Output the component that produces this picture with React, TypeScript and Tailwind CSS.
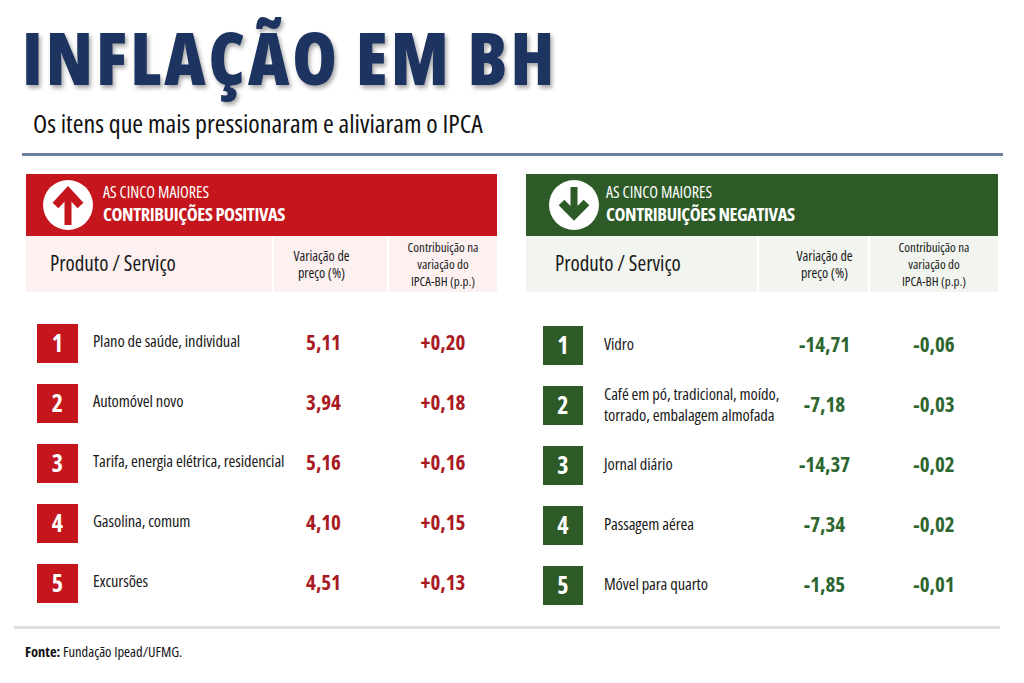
import React from 'react';

// Infográfico: Inflação em BH — maiores contribuições positivas e negativas

const cond = "font-['Open_Sans','Roboto',sans-serif] font-stretch-[75%]";

type Item = { n: number; label: string[]; price: string; contrib: string };

const positivos: Item[] = [
  { n: 1, label: ['Plano de saúde, individual'], price: '5,11', contrib: '+0,20' },
  { n: 2, label: ['Automóvel novo'], price: '3,94', contrib: '+0,18' },
  { n: 3, label: ['Tarifa, energia elétrica, residencial'], price: '5,16', contrib: '+0,16' },
  { n: 4, label: ['Gasolina, comum'], price: '4,10', contrib: '+0,15' },
  { n: 5, label: ['Excursões'], price: '4,51', contrib: '+0,13' },
];

const negativos: Item[] = [
  { n: 1, label: ['Vidro'], price: '-14,71', contrib: '-0,06' },
  { n: 2, label: ['Café em pó, tradicional, moído,', 'torrado, embalagem almofada'], price: '-7,18', contrib: '-0,03' },
  { n: 3, label: ['Jornal diário'], price: '-14,37', contrib: '-0,02' },
  { n: 4, label: ['Passagem aérea'], price: '-7,34', contrib: '-0,02' },
  { n: 5, label: ['Móvel para quarto'], price: '-1,85', contrib: '-0,01' },
];

function ArrowUp() {
  return (
    <svg viewBox="0 0 50 50" className="h-[50px] w-[50px] shrink-0">
      <circle cx="25" cy="25" r="25" fill="#fff" />
      <path d="M25 45V16" stroke="#c4161c" strokeWidth="7" fill="none" />
      <path d="M12.5 25.5L25 12L37.5 25.5" stroke="#c4161c" strokeWidth="8" fill="none" strokeLinejoin="miter" />
    </svg>
  );
}

function ArrowDown() {
  return (
    <svg viewBox="0 0 50 50" className="h-[50px] w-[50px] shrink-0">
      <circle cx="25" cy="25" r="25" fill="#fff" />
      <path d="M25 7V34" stroke="#2d5a27" strokeWidth="7" fill="none" />
      <path d="M12.5 22.5L25 35L37.5 22.5" stroke="#2d5a27" strokeWidth="8" fill="none" strokeLinejoin="miter" />
    </svg>
  );
}

function PositivePanel() {
  return (
    <div className="w-[471px]">
      <div className="flex h-[62px] items-center gap-[10px] bg-[#c4161c] pl-[17px] text-white">
        <ArrowUp />
        <div className={`${cond} -mt-[3px] leading-none`}>
          <div className="text-[16px]">AS CINCO MAIORES</div>
          <div className="mt-[5px] text-[18.5px] font-bold tracking-[-0.4px]">CONTRIBUIÇÕES POSITIVAS</div>
        </div>
      </div>
      <div className={`${cond} flex h-[56px] gap-[2px] bg-white text-[#1a1a1a]`}>
        <div className="flex w-[246px] items-center bg-[#fcf0f1] pl-[24px] text-[21px]">Produto / Serviço</div>
        <div className="flex w-[113px] items-center justify-center bg-[#fcf0f1] pr-[18px] text-center text-[14px] leading-[17px]">
          Variação de<br />preço (%)
        </div>
        <div className="flex flex-1 items-center justify-center bg-[#fcf0f1] text-center text-[13px] leading-[17px]">
          Contribuição na<br />variação do<br />IPCA-BH (p.p.)
        </div>
      </div>
      <div className="mt-[21px]">
        {positivos.map(it => (
          <div key={it.n} className={`${cond} flex h-[60px] items-center`}>
            <div className="flex w-[246px] items-center">
              <div className="ml-[11px] flex h-[39px] w-[41px] shrink-0 items-center justify-center bg-[#c4161c] text-[24px] font-bold text-white">
                {it.n}
              </div>
              <div className="ml-[15px] -mt-[4px] whitespace-nowrap text-[16.5px] leading-[20px] tracking-[-0.1px] text-[#1a1a1a]">{it.label.join(' ')}</div>
            </div>
            <div className="ml-[2px] w-[113px] pr-[14px] text-center text-[21px] font-bold text-[#a81a1f]">{it.price}</div>
            <div className="ml-[2px] flex-1 text-center text-[21px] font-bold text-[#a81a1f]">{it.contrib}</div>
          </div>
        ))}
      </div>
    </div>
  );
}

function NegativePanel() {
  return (
    <div className="w-[472px]">
      <div className="flex h-[62px] items-center gap-[7px] bg-[#2d5a27] pl-[23px] text-white">
        <ArrowDown />
        <div className={`${cond} -mt-[3px] leading-none`}>
          <div className="text-[16px]">AS CINCO MAIORES</div>
          <div className="mt-[5px] text-[18.5px] font-bold tracking-[-0.4px]">CONTRIBUIÇÕES NEGATIVAS</div>
        </div>
      </div>
      <div className={`${cond} flex h-[56px] gap-[2px] bg-white text-[#1a1a1a]`}>
        <div className="flex w-[231px] items-center bg-[#f1f4ef] pl-[29px] text-[21px]">Produto / Serviço</div>
        <div className="flex w-[109px] items-center justify-center bg-[#f1f4ef] pl-[22px] text-center text-[14px] leading-[17px]">
          Variação de<br />preço (%)
        </div>
        <div className="flex flex-1 items-center justify-center bg-[#f1f4ef] text-center text-[13px] leading-[17px]">
          Contribuição na<br />variação do<br />IPCA-BH (p.p.)
        </div>
      </div>
      <div className="mt-[23px]">
        {negativos.map(it => (
          <div key={it.n} className={`${cond} flex h-[60px] items-center`}>
            <div className="flex w-[231px] items-center">
              <div className="ml-[17px] flex h-[39px] w-[40px] shrink-0 items-center justify-center bg-[#2d5a27] text-[24px] font-bold text-white">
                {it.n}
              </div>
              <div className="ml-[21px] -mt-[3px] whitespace-nowrap text-[16.5px] leading-[21px] tracking-[-0.1px] text-[#1a1a1a]">
                {it.label.map(l => (
                  <div key={l}>{l}</div>
                ))}
              </div>
            </div>
            <div className="ml-[2px] w-[109px] pl-[22px] text-center text-[21px] font-bold text-[#2e6630]">{it.price}</div>
            <div className="ml-[2px] flex-1 text-center text-[21px] font-bold text-[#2e6630]">{it.contrib}</div>
          </div>
        ))}
      </div>
    </div>
  );
}

export default function App() {
  return (
    <div className="h-[683px] w-[1024px] overflow-hidden bg-white">
      <div className="pl-[22px] pt-[18px]">
        <h1 className="font-['Open_Sans',sans-serif] font-stretch-[75%] text-[72px] font-extrabold leading-[78px] tracking-[3px] text-[#1d3461] [text-shadow:2px_3px_4px_rgba(0,0,0,0.35)]">
          INFLAÇÃO EM BH
        </h1>
        <p className={`${cond} mt-[12px] pl-[11px] text-[26px] leading-[30px] text-[#111]`}>
          Os itens que mais pressionaram e aliviaram o IPCA
        </p>
      </div>
      <div className="ml-[22px] mt-[15px] h-[3px] w-[981px] bg-[#6e7f9c]" />
      <div className="mt-[18px] flex gap-[29px] pl-[26px]">
        <PositivePanel />
        <NegativePanel />
      </div>
      <div className="ml-[14px] mt-[11px] h-[3px] w-[986px] bg-[#dde0e3]" />
      <p className={`${cond} mt-[12px] pl-[25px] text-[14.5px] text-[#111]`}>
        <span className="font-bold">Fonte:</span> Fundação Ipead/UFMG.
      </p>
    </div>
  );
}
